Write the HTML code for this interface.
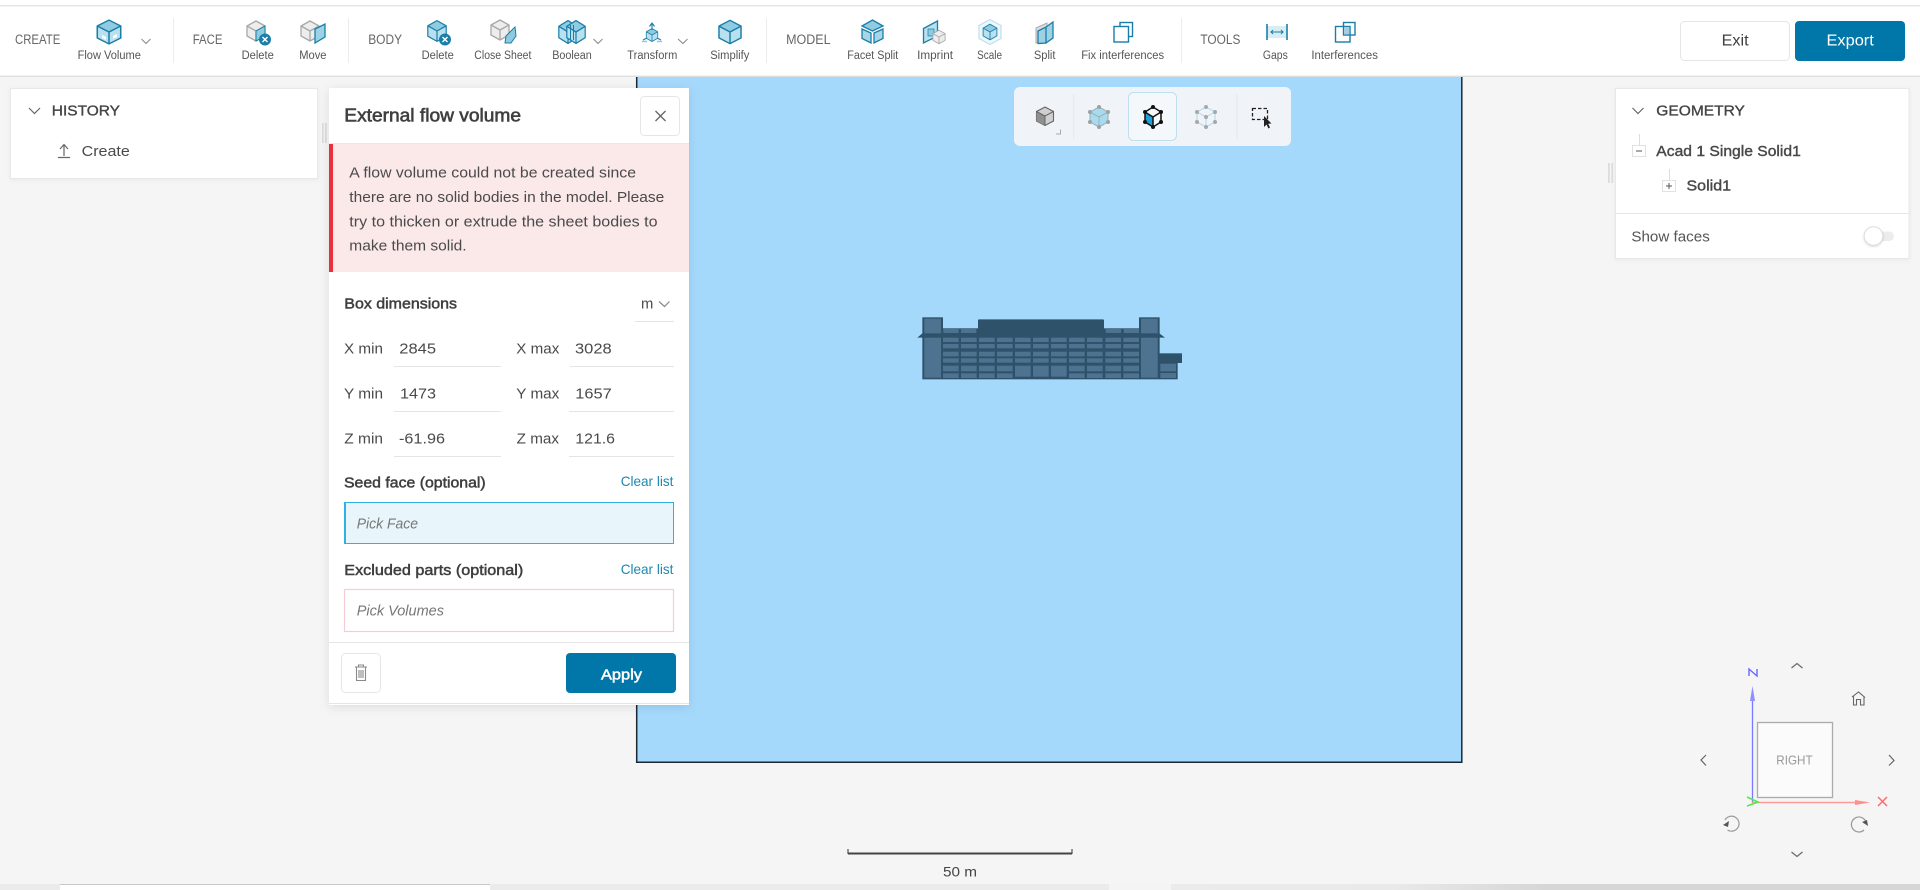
<!DOCTYPE html>
<html lang="en"><head><meta charset="utf-8"><title>External flow volume</title>
<style>
html,body{margin:0;padding:0;background:#f5f5f5;width:1920px;height:890px;overflow:hidden}
svg{display:block}
text{font-family:"Liberation Sans",Arial,sans-serif;fill:#444}
.tb{font-size:11.5px;fill:#555}
.sec{font-size:13.5px;fill:#666}
.h{font-size:14.5px;fill:#444;stroke:#444;stroke-width:.35}
.b{font-size:15px;fill:#3f3f3f;stroke:#3f3f3f;stroke-width:.5}
.r{font-size:15px;fill:#4a4a4a}
.cl{font-size:14px;fill:#1f87ad}
.ph{font-size:14.5px;fill:#777;font-style:italic}
.ic{fill:none;stroke:#1a7ea8;stroke-width:1.4;stroke-linejoin:round}
.gr{fill:none;stroke:#a8a8a8;stroke-width:1.3;stroke-linejoin:round}
.ln{fill:none;stroke:#666;stroke-width:1.2}
</style></head><body>
<svg width="1920" height="890" viewBox="0 0 1920 890" xmlns="http://www.w3.org/2000/svg">
<defs>
<g id="bc"><path d="M0-13 11.5-6.5V6.5L0 13-11.5 6.5V-6.5Z" fill="#b9e0ee"/><path d="M0-13 11.5-6.5 0 0-11.5-6.5Z" fill="#8fcbe1"/><path d="M0-13 11.5-6.5V6.5L0 13-11.5 6.5V-6.5ZM0 0 11.5-6.5M0 0-11.5-6.5M0 0V13" class="ic" style="stroke-width:1.5"/></g>
<g id="gc"><path d="M0-10 9-5V5L0 10-9 5V-5Z" fill="#ededed"/><path d="M0-10 9-5V5L0 10-9 5V-5ZM0 0 9-5M0 0-9-5M0 0V10" class="gr"/></g>
<g id="col" fill="#4d7390"><rect y="113" width="47" height="13"/><rect y="132" width="47" height="13"/><rect y="155" width="47" height="14"/><rect y="175" width="47" height="13"/><rect y="197" width="47" height="17"/><rect y="220" width="47" height="14"/></g>
<g id="colm" fill="#4d7390"><rect y="113" width="47" height="13"/><rect y="132" width="47" height="13"/><rect y="155" width="47" height="14"/><rect y="175" width="47" height="13"/><rect y="197" width="47" height="33"/></g>
</defs>

<rect width="1920" height="890" fill="#f5f5f5"/>
<!-- viewport model -->
<rect x="636" y="76" width="826" height="686" fill="#a5d9fc"/>
<path d="M636.7 76V762.2H1461.8V76" fill="none" stroke="#1c2730" stroke-width="1.5"/>

<!-- building -->
<g transform="translate(900 300) scale(.33333)">
<rect x="128" y="85" width="592" height="153" fill="#2d5269"/>
<rect x="234" y="58" width="378" height="50" rx="3" fill="#2d5269"/>
<rect x="130" y="87" width="46" height="12" fill="#4d7390"/><rect x="183" y="87" width="46" height="12" fill="#4d7390"/><rect x="617" y="87" width="46" height="12" fill="#4d7390"/><rect x="671" y="87" width="46" height="12" fill="#4d7390"/>
<rect x="67" y="52" width="62" height="186" fill="#2d5269"/><rect x="717" y="52" width="62" height="186" fill="#2d5269"/>
<path d="M52 113 67 100H778L795 113Z" fill="#2d5269"/>
<rect x="73" y="56" width="50" height="44" fill="#4d7390"/><rect x="73" y="113" width="50" height="120" fill="#4d7390"/>
<rect x="723" y="56" width="50" height="44" fill="#4d7390"/><rect x="723" y="113" width="50" height="120" fill="#4d7390"/>
<rect x="778" y="160" width="68" height="29" fill="#2d5269"/><rect x="778" y="188" width="55" height="50" fill="#2d5269"/>
<rect x="781" y="191" width="47" height="23" fill="#4d7390"/><rect x="781" y="219" width="47" height="15" fill="#4d7390"/>
<use href="#col" x="129"/><use href="#col" x="183"/><use href="#col" x="237"/><use href="#col" x="291"/><use href="#colm" x="345"/><use href="#colm" x="399"/><use href="#colm" x="453"/><use href="#col" x="507"/><use href="#col" x="561"/><use href="#col" x="616"/><use href="#col" x="670"/>
</g>

<!-- top toolbar -->
<rect width="1920" height="76" fill="#fff"/>
<rect y="5" width="1920" height="1.4" fill="#e4e4e4"/>
<rect y="75.6" width="1920" height="1.4" fill="#dedede"/>
<g fill="#ececec"><rect x="173" y="18" width="1" height="45"/><rect x="348" y="18" width="1" height="45"/><rect x="766" y="18" width="1" height="45"/><rect x="1181" y="18" width="1" height="45"/></g>

<text class="sec" x="15" y="44" textLength="45.3" lengthAdjust="spacingAndGlyphs">CREATE</text>
<text class="sec" x="192.7" y="44" textLength="29.8" lengthAdjust="spacingAndGlyphs">FACE</text>
<text class="sec" x="368.2" y="44" textLength="33.9" lengthAdjust="spacingAndGlyphs">BODY</text>
<text class="sec" x="786.1" y="44" textLength="44.5" lengthAdjust="spacingAndGlyphs">MODEL</text>
<text class="sec" x="1200.4" y="44" textLength="40" lengthAdjust="spacingAndGlyphs">TOOLS</text>

<text class="tb" x="77.6" y="59" textLength="63.3" lengthAdjust="spacingAndGlyphs">Flow Volume</text>
<text class="tb" x="241.6" y="59" textLength="32.2" lengthAdjust="spacingAndGlyphs">Delete</text>
<text class="tb" x="299.2" y="59" textLength="27.3" lengthAdjust="spacingAndGlyphs">Move</text>
<text class="tb" x="421.6" y="59" textLength="32.2" lengthAdjust="spacingAndGlyphs">Delete</text>
<text class="tb" x="474.3" y="59" textLength="57.1" lengthAdjust="spacingAndGlyphs">Close Sheet</text>
<text class="tb" x="552.2" y="59" textLength="39.6" lengthAdjust="spacingAndGlyphs">Boolean</text>
<text class="tb" x="627.3" y="59" textLength="50" lengthAdjust="spacingAndGlyphs">Transform</text>
<text class="tb" x="710.2" y="59" textLength="39.2" lengthAdjust="spacingAndGlyphs">Simplify</text>
<text class="tb" x="847.3" y="59" textLength="51" lengthAdjust="spacingAndGlyphs">Facet Split</text>
<text class="tb" x="917.1" y="59" textLength="35.9" lengthAdjust="spacingAndGlyphs">Imprint</text>
<text class="tb" x="977.1" y="59" textLength="24.9" lengthAdjust="spacingAndGlyphs">Scale</text>
<text class="tb" x="1033.9" y="59" textLength="21.6" lengthAdjust="spacingAndGlyphs">Split</text>
<text class="tb" x="1081.2" y="59" textLength="82.9" lengthAdjust="spacingAndGlyphs">Fix interferences</text>
<text class="tb" x="1262.9" y="59" textLength="24.9" lengthAdjust="spacingAndGlyphs">Gaps</text>
<text class="tb" x="1311.4" y="59" textLength="66.5" lengthAdjust="spacingAndGlyphs">Interferences</text>

<!-- toolbar chevrons -->
<path class="ln" style="stroke:#888;stroke-width:1" d="M141.5 39 146 43.5 150.500 39M593.500 39 598 43.500 602.500 39M678 39 683 43.500 687.500 39"/>

<!-- Flow Volume -->
<use href="#bc" transform="translate(109 32) scale(1.02 .92)"/>
<path d="M102 35l4 2v3l-4-2zM113 36l4-2v3l-4 2z" fill="#fff"/>
<!-- Face Delete -->
<use href="#gc" x="256" y="31"/><path d="M256 31 265 26V36L256 41Z" fill="#8ecbe0" stroke="#1a7ea8"/>
<circle cx="265" cy="39.500" r="6" fill="#1a7ea8"/><path d="M262.500 37 267.500 42M267.500 37 262.500 42" stroke="#fff" stroke-width="1.400"/>
<!-- Move -->
<use href="#gc" x="310" y="31"/><path d="M315 29 325 24V37L315 43Z" fill="#9dd2e5" stroke="#1a7ea8" stroke-width="1.300"/>
<!-- Body Delete -->
<use href="#bc" transform="translate(437 31) scale(.8)"/>
<circle cx="445" cy="39.500" r="6" fill="#1a7ea8"/><path d="M442.500 37 447.500 42M447.500 37 442.500 42" stroke="#fff" stroke-width="1.400"/>
<!-- Close sheet -->
<use href="#gc" x="500" y="30"/><path d="M505 43 506 36 515 27 516 36 511 43Z" fill="#8ecbe0" stroke="#1a7ea8"/>
<!-- Boolean -->
<use href="#bc" transform="translate(568 32) scale(.8 .88)"/><use href="#bc" transform="translate(576 32) scale(.8 .88)"/>
<path d="M570.500 25V40M573.500 25V40" class="ic" style="stroke-width:1"/>
<!-- Transform -->
<use href="#bc" transform="translate(652 35) scale(.5)"/>
<path d="M652 30V24M649.500 26.500 652 23 654.500 26.500" class="ic" style="stroke-width:1.100"/><path d="M643 40 647 38M657 38 661 40" class="ic" style="stroke-width:1.100"/>
<path d="M642 41.500h5M657 41.500h5" stroke="#8ecbe0" stroke-width="1.500"/>
<!-- Simplify -->
<use href="#bc" transform="translate(730 32) scale(.96 .9)"/>
<!-- Facet split -->
<path d="M872.500 20 883 26 872.500 31 862 26Z" fill="#8fcbe1" stroke="#1a7ea8" stroke-width="1.300"/>
<path d="M862 29 871 33V43L862 38.500ZM874 33 883 29V38.500L874 43Z" fill="#a5d5e7" stroke="#1a7ea8" stroke-width="1.300"/>
<!-- Imprint -->
<path d="M923.500 28.500 937.500 21V36L923.500 43Z" fill="#b9e0ee" stroke="#1a7ea8" stroke-width="1.300"/>
<rect x="928" y="29" width="6" height="7" fill="#8ecbe0" stroke="#1a7ea8" stroke-width=".7"/>
<use href="#gc" transform="translate(939 37) scale(.68)"/>
<!-- Scale -->
<path d="M990 19.500 1001 25.500V38.500L990 44.500 979 38.500V25.500Z" fill="#eef7fb" stroke="#bfe0ec" stroke-width="1.200"/>
<use href="#bc" transform="translate(990 32) scale(.6)"/>
<!-- Split -->
<path d="M1036 28 1047 23V38L1036 43Z" fill="#ddd" stroke="#aaa"/>
<path d="M1038 31 1046 27V43L1038 43.500ZM1046 27 1053 22V38L1046 43Z" fill="#9dd2e5" stroke="#1a7ea8" stroke-width="1.300"/>
<!-- Fix interferences -->
<rect x="1120" y="22.500" width="12.500" height="14" fill="#fff" stroke="#1a7ea8" stroke-width="1.400"/>
<rect x="1114" y="26.500" width="14.500" height="15.500" fill="#fff" stroke="#1a7ea8" stroke-width="1.400"/>
<!-- Gaps -->
<rect x="1267" y="26" width="20" height="12" fill="#d8edf5"/>
<path d="M1267 24V40M1287 24V40" stroke="#1a7ea8" stroke-width="1.600"/>
<path d="M1271 32H1283M1273 30 1271 32 1273 34M1281 30 1283 32 1281 34" fill="none" stroke="#1a7ea8" stroke-width="1"/>
<!-- Interferences -->
<rect x="1335.500" y="26.500" width="14.500" height="15.500" fill="#fff" stroke="#1a7ea8" stroke-width="1.400"/>
<rect x="1343.500" y="22.500" width="11.500" height="12.500" fill="none" stroke="#1a7ea8" stroke-width="1.400"/>
<rect x="1344" y="27" width="5.500" height="7.500" fill="#a5cfe0"/>

<!-- Exit / Export -->
<rect x="1680.500" y="21.500" width="109" height="39" rx="4" fill="#fff" stroke="#e6e6e6"/>
<text class="r" style="font-size:15.500px;fill:#3f3f3f" x="1721.600" y="45.700" textLength="27" lengthAdjust="spacingAndGlyphs">Exit</text>
<rect x="1795" y="21" width="110" height="40" rx="4" fill="#0077a8"/>
<text class="r" style="font-size:15.500px;fill:#fff" x="1826.500" y="45.700" textLength="47.300" lengthAdjust="spacingAndGlyphs">Export</text>

<!-- HISTORY -->
<rect x="10.500" y="88.500" width="307" height="90" fill="#fff" stroke="#e8e8e8" style="filter:drop-shadow(0 1px 2px rgba(0,0,0,.05))"/>
<path class="ln" d="M29 108 34.500 113.500 40 108"/>
<text class="h" x="51.800" y="115.700" textLength="68.200" lengthAdjust="spacingAndGlyphs">HISTORY</text>
<path class="ln" d="M64 156V145M60 149 64 144.500 68 149M58 157.500H70"/>
<text class="r" x="81.600" y="156" textLength="48.200" lengthAdjust="spacingAndGlyphs">Create</text>
<rect x="322" y="123" width="1.700" height="20" fill="#dcdcdc"/><rect x="325" y="123" width="1.700" height="20" fill="#dcdcdc"/>

<!-- GEOMETRY -->
<rect x="1615.500" y="88.500" width="293.500" height="170" fill="#fff" stroke="#e8e8e8" style="filter:drop-shadow(0 1px 2px rgba(0,0,0,.05))"/>
<path class="ln" d="M1632.500 108 1638 113.500 1643.500 108"/>
<text class="h" x="1656.300" y="115.700" textLength="88.600" lengthAdjust="spacingAndGlyphs">GEOMETRY</text>
<path d="M1639.500 134V145M1669.500 169V180" stroke="#ddd" fill="none"/>
<rect x="1632.500" y="145.500" width="13" height="11" fill="#fff" stroke="#e2e2e2"/><path d="M1636 151H1642" stroke="#555"/>
<text class="r" style="stroke:#444;stroke-width:.4" x="1656.300" y="156" textLength="144.500" lengthAdjust="spacingAndGlyphs">Acad 1 Single Solid1</text>
<rect x="1662.500" y="180.500" width="13" height="11" fill="#fff" stroke="#e2e2e2"/><path d="M1666 186H1672M1669 183V189" stroke="#555"/>
<text class="r" style="stroke:#444;stroke-width:.4" x="1686.500" y="190.700" textLength="44.500" lengthAdjust="spacingAndGlyphs">Solid1</text>
<rect x="1616" y="213" width="293" height="1" fill="#e6e6e6"/>
<text class="r" style="font-size:14.500px;fill:#555" x="1631.400" y="241.700" textLength="78.400" lengthAdjust="spacingAndGlyphs">Show faces</text>
<rect x="1872" y="231.500" width="22" height="9.500" rx="4.700" fill="#ececec"/>
<circle cx="1873.500" cy="236" r="9.300" fill="#fff" stroke="#ddd" style="filter:drop-shadow(0 1px 1px rgba(0,0,0,.15))"/>
<rect x="1608" y="163" width="1.800" height="20" fill="#dcdcdc"/><rect x="1611.300" y="163" width="1.800" height="20" fill="#dcdcdc"/>

<!-- view toolbar -->
<rect x="1014" y="87" width="277" height="59" rx="6" fill="#f0f4f8"/>
<rect x="1073.300" y="94" width="1" height="45" fill="#e4e8ec"/><rect x="1236.300" y="94" width="1" height="45" fill="#e4e8ec"/>
<rect x="1128.500" y="92.500" width="48" height="48" rx="5" fill="#f5f8fb" stroke="#bde0ef"/>
<g transform="translate(1045 116)"><path d="M0-9 8.500-4.500V5L0 9.500-8.500 5V-4.500Z" fill="#cfcfcf" stroke="#666" stroke-width="1.100"/><path d="M0 0-8.500-4.500V5L0 9.500Z" fill="#8f8f8f"/><path d="M0 0 8.500-4.500M0 0-8.500-4.500M0 0V9.500" stroke="#666" fill="none"/></g>
<path d="M1056 134H1060.500V129.500" fill="none" stroke="#aaa"/>
<g transform="translate(1099 117)"><path d="M0-10 9-5V5L0 10-9 5V-5Z" fill="#a9dbee"/><path d="M0-10 9-5V5L0 10-9 5V-5ZM0 0 9-5M0 0-9-5M0 0V10" fill="none" stroke="#9bb4c0" stroke-width="1.100"/><g fill="#a0a0a0"><circle cx="0" cy="-10" r="2"/><circle cx="9" cy="-5" r="2"/><circle cx="9" cy="5" r="2"/><circle cx="0" cy="10" r="2"/><circle cx="-9" cy="5" r="2"/><circle cx="-9" cy="-5" r="2"/></g></g>
<g transform="translate(1153 117)"><path d="M0 0-8-4.500V5L0 10Z" fill="#1e9fd6"/><path d="M0-10 8-5V5L0 10-8 5V-5ZM0 0 8-5M0 0-8-5M0 0V10" fill="none" stroke="#111" stroke-width="1.500"/><g fill="#111"><circle cx="0" cy="-10" r="2"/><circle cx="8" cy="-5" r="2"/><circle cx="8" cy="5" r="2"/><circle cx="0" cy="10" r="2"/><circle cx="-8" cy="5" r="2"/><circle cx="-8" cy="-5" r="2"/></g></g>
<g transform="translate(1206 117)"><path d="M0-10 9-5V5L0 10-9 5V-5ZM0 0 9-5M0 0-9-5M0 0V10" fill="none" stroke="#a5d9ea" stroke-width="1"/><g fill="#a8a8a8"><circle cx="0" cy="-10" r="2"/><circle cx="9" cy="-5" r="2"/><circle cx="9" cy="5" r="2"/><circle cx="0" cy="10" r="2"/><circle cx="-9" cy="5" r="2"/><circle cx="-9" cy="-5" r="2"/><circle cx="0" cy="0" r="2"/></g></g>
<rect x="1252.500" y="108.500" width="15" height="11" fill="none" stroke="#222" stroke-width="1.300" stroke-dasharray="3.500 2"/>
<path d="M1264 116V127L1266.500 124.500 1268.500 128.500 1270 127.500 1268.200 123.800 1271.500 123.500Z" fill="#222"/>

<!-- External flow volume panel -->
<rect x="329" y="88" width="360" height="617" fill="#fff" style="filter:drop-shadow(0 2px 5px rgba(0,0,0,.1))"/>
<rect x="329" y="703" width="360" height="1" fill="#e6e6e6"/>
<text style="font-size:18px;fill:#3f3f3f;stroke:#3f3f3f;stroke-width:.6" x="344.300" y="121.700" textLength="176.700" lengthAdjust="spacingAndGlyphs">External flow volume</text>
<rect x="640.500" y="96.500" width="39" height="39" rx="4" fill="#fff" stroke="#e6e6e6"/>
<path d="M655.500 111 665.500 121M665.500 111 655.500 121" stroke="#666" stroke-width="1.300"/>
<rect x="329" y="143" width="360" height="1" fill="#e8e8e8"/>
<rect x="329" y="144" width="360" height="128" fill="#fbe8e9"/>
<rect x="329" y="144" width="4" height="128" fill="#e8303f"/>
<text class="r" x="349.300" y="177.300" textLength="286.700" lengthAdjust="spacingAndGlyphs">A flow volume could not be created since</text>
<text class="r" x="349.300" y="202" textLength="315" lengthAdjust="spacingAndGlyphs">there are no solid bodies in the model. Please</text>
<text class="r" x="349.300" y="226.300" textLength="308.300" lengthAdjust="spacingAndGlyphs">try to thicken or extrude the sheet bodies to</text>
<text class="r" x="349.300" y="250.300" textLength="117.300" lengthAdjust="spacingAndGlyphs">make them solid.</text>

<text class="b" x="344.300" y="308.300" textLength="112.700" lengthAdjust="spacingAndGlyphs">Box dimensions</text>
<text class="r" x="641" y="308.300" textLength="12.300" lengthAdjust="spacingAndGlyphs">m</text>
<path class="ln" d="M659 301.500 664.500 306.500 669.500 301.500" style="stroke:#888"/>
<rect x="635" y="321" width="39" height="1" fill="#e4e4e4"/>

<text class="r" x="344" y="353.300" textLength="39" lengthAdjust="spacingAndGlyphs">X min</text>
<text class="r" x="399.300" y="353.300" textLength="36.700" lengthAdjust="spacingAndGlyphs">2845</text>
<text class="r" x="516.300" y="353.300" textLength="43" lengthAdjust="spacingAndGlyphs">X max</text>
<text class="r" x="575" y="353.300" textLength="36.700" lengthAdjust="spacingAndGlyphs">3028</text>
<rect x="394" y="366" width="107" height="1" fill="#e4e4e4"/><rect x="570" y="366" width="104" height="1" fill="#e4e4e4"/>

<text class="r" x="344" y="398.300" textLength="39" lengthAdjust="spacingAndGlyphs">Y min</text>
<text class="r" x="400" y="398.300" textLength="36" lengthAdjust="spacingAndGlyphs">1473</text>
<text class="r" x="516.300" y="398.300" textLength="43" lengthAdjust="spacingAndGlyphs">Y max</text>
<text class="r" x="575.300" y="398.300" textLength="36.400" lengthAdjust="spacingAndGlyphs">1657</text>
<rect x="394" y="411" width="107" height="1" fill="#e4e4e4"/><rect x="569" y="411" width="105" height="1" fill="#e4e4e4"/>

<text class="r" x="344.300" y="443.300" textLength="38.700" lengthAdjust="spacingAndGlyphs">Z min</text>
<text class="r" x="399" y="443.300" textLength="46" lengthAdjust="spacingAndGlyphs">-61.96</text>
<text class="r" x="516.700" y="443.300" textLength="42.300" lengthAdjust="spacingAndGlyphs">Z max</text>
<text class="r" x="575.300" y="443.300" textLength="39.700" lengthAdjust="spacingAndGlyphs">121.6</text>
<rect x="394" y="456" width="107" height="1" fill="#e4e4e4"/><rect x="569" y="456" width="105" height="1" fill="#e4e4e4"/>

<text class="b" x="344" y="487.700" textLength="141.700" lengthAdjust="spacingAndGlyphs">Seed face (optional)</text>
<text class="cl" x="620.700" y="486" textLength="52.700" lengthAdjust="spacingAndGlyphs">Clear list</text>
<rect x="344.500" y="502.500" width="329" height="41" fill="#e8f5fb" stroke="#2fb2df"/>
<rect x="344" y="502" width="2" height="42" fill="#2fb2df"/>
<text class="ph" x="356.700" y="528.700" textLength="61.300" lengthAdjust="spacingAndGlyphs">Pick Face</text>

<text class="b" x="344.300" y="575" textLength="179" lengthAdjust="spacingAndGlyphs">Excluded parts (optional)</text>
<text class="cl" x="620.700" y="574" textLength="52.700" lengthAdjust="spacingAndGlyphs">Clear list</text>
<rect x="344.500" y="589.500" width="329" height="42" fill="#fff" stroke="#f5ccd4" stroke-width="1.200"/>
<text class="ph" x="356.700" y="615.700" textLength="87.300" lengthAdjust="spacingAndGlyphs">Pick Volumes</text>

<rect x="329" y="642" width="360" height="1" fill="#e6e6e6"/>
<rect x="341.500" y="653.500" width="39" height="39" rx="4" fill="#fff" stroke="#e6e6e6"/>
<path d="M355 667H367M358.500 667V665H363.500V667M356.500 667V680.500H365.500V667M359 670V678M361 670V678M363 670V678" fill="none" stroke="#8a8a8a" stroke-width="1.100"/>
<rect x="566" y="653" width="110" height="40" rx="4" fill="#0077a8"/>
<text class="b" style="fill:#fff;stroke:#fff" x="601" y="679.300" textLength="41" lengthAdjust="spacingAndGlyphs">Apply</text>

<!-- scale bar -->
<path d="M848 849V853.500H1072V849" fill="none" stroke="#333" stroke-width="1"/><rect x="848" y="852.500" width="224" height="2" fill="#444"/>
<text style="font-size:14px;fill:#444" x="943" y="876.700" textLength="34" lengthAdjust="spacingAndGlyphs">50 m</text>

<!-- nav cube -->
<rect x="1757.500" y="722.500" width="75" height="75" fill="#fbfbfb" stroke="#aaa" stroke-width="1.300"/>
<text style="font-size:13px;fill:#999" x="1776.300" y="764.300" textLength="36.300" lengthAdjust="spacingAndGlyphs">RIGHT</text>
<path d="M1752.500 802V695" stroke="#7b7bff" stroke-width="1.300"/><path d="M1750 701 1752.500 686 1755 701Z" fill="#8f8fff"/>
<path d="M1749 676V669L1757 676V669" fill="none" stroke="#6868ff" stroke-width="1.400"/>
<path d="M1752 802.500H1860" stroke="#ff9a9a" stroke-width="1.600"/><path d="M1855 800 1870 802.500 1855 805Z" fill="#ff8f8f"/>
<path d="M1878 797 1887 806M1887 797 1878 806" stroke="#ff6a6a" stroke-width="1.500"/>
<path d="M1747 797 1758 802 1747 806" fill="none" stroke="#55e855" stroke-width="1.600"/>
<path class="ln" d="M1791.500 668 1797 663.500 1802.500 668M1791.500 852 1797 856.500 1802.500 852M1706 755 1701 760 1706 765.500M1889 755 1894 760.500 1889 765.500"/>
<path d="M1852 697 1858.500 692 1865 697.500M1853.500 696V705H1856.500V699.500H1860.500V705H1864V696.500" fill="none" stroke="#666" stroke-width="1.100"/>
<path d="M1725 820A7.500 7.500 0 1 1 1727.500 830" fill="none" stroke="#999" stroke-width="1.200"/><path d="M1723 825 1729 821 1728 827Z" fill="#555"/>
<path d="M1866 822A7.500 7.500 0 1 0 1864 830" fill="none" stroke="#999" stroke-width="1.200"/><path d="M1868 826 1862 822 1867 820Z" fill="#555"/>

<!-- bottom strip -->
<defs><linearGradient id="bs" x1="0" x2="1"><stop offset="0" stop-color="#ebebeb"/><stop offset=".3" stop-color="#e9e9e9"/><stop offset=".5" stop-color="#d6d6d6"/><stop offset="1" stop-color="#d6d6d6"/></linearGradient></defs>
<rect y="884" width="1109" height="6" fill="#ebebeb"/>
<rect x="1109" y="884" width="62" height="6" fill="#f4f4f4"/>
<rect x="1171" y="884" width="749" height="6" fill="url(#bs)"/>
<rect x="60" y="884" width="430" height="6" fill="#fff"/><rect x="60" y="884" width="430" height="1" fill="#c8c8c8"/>
</svg>
</body></html>
